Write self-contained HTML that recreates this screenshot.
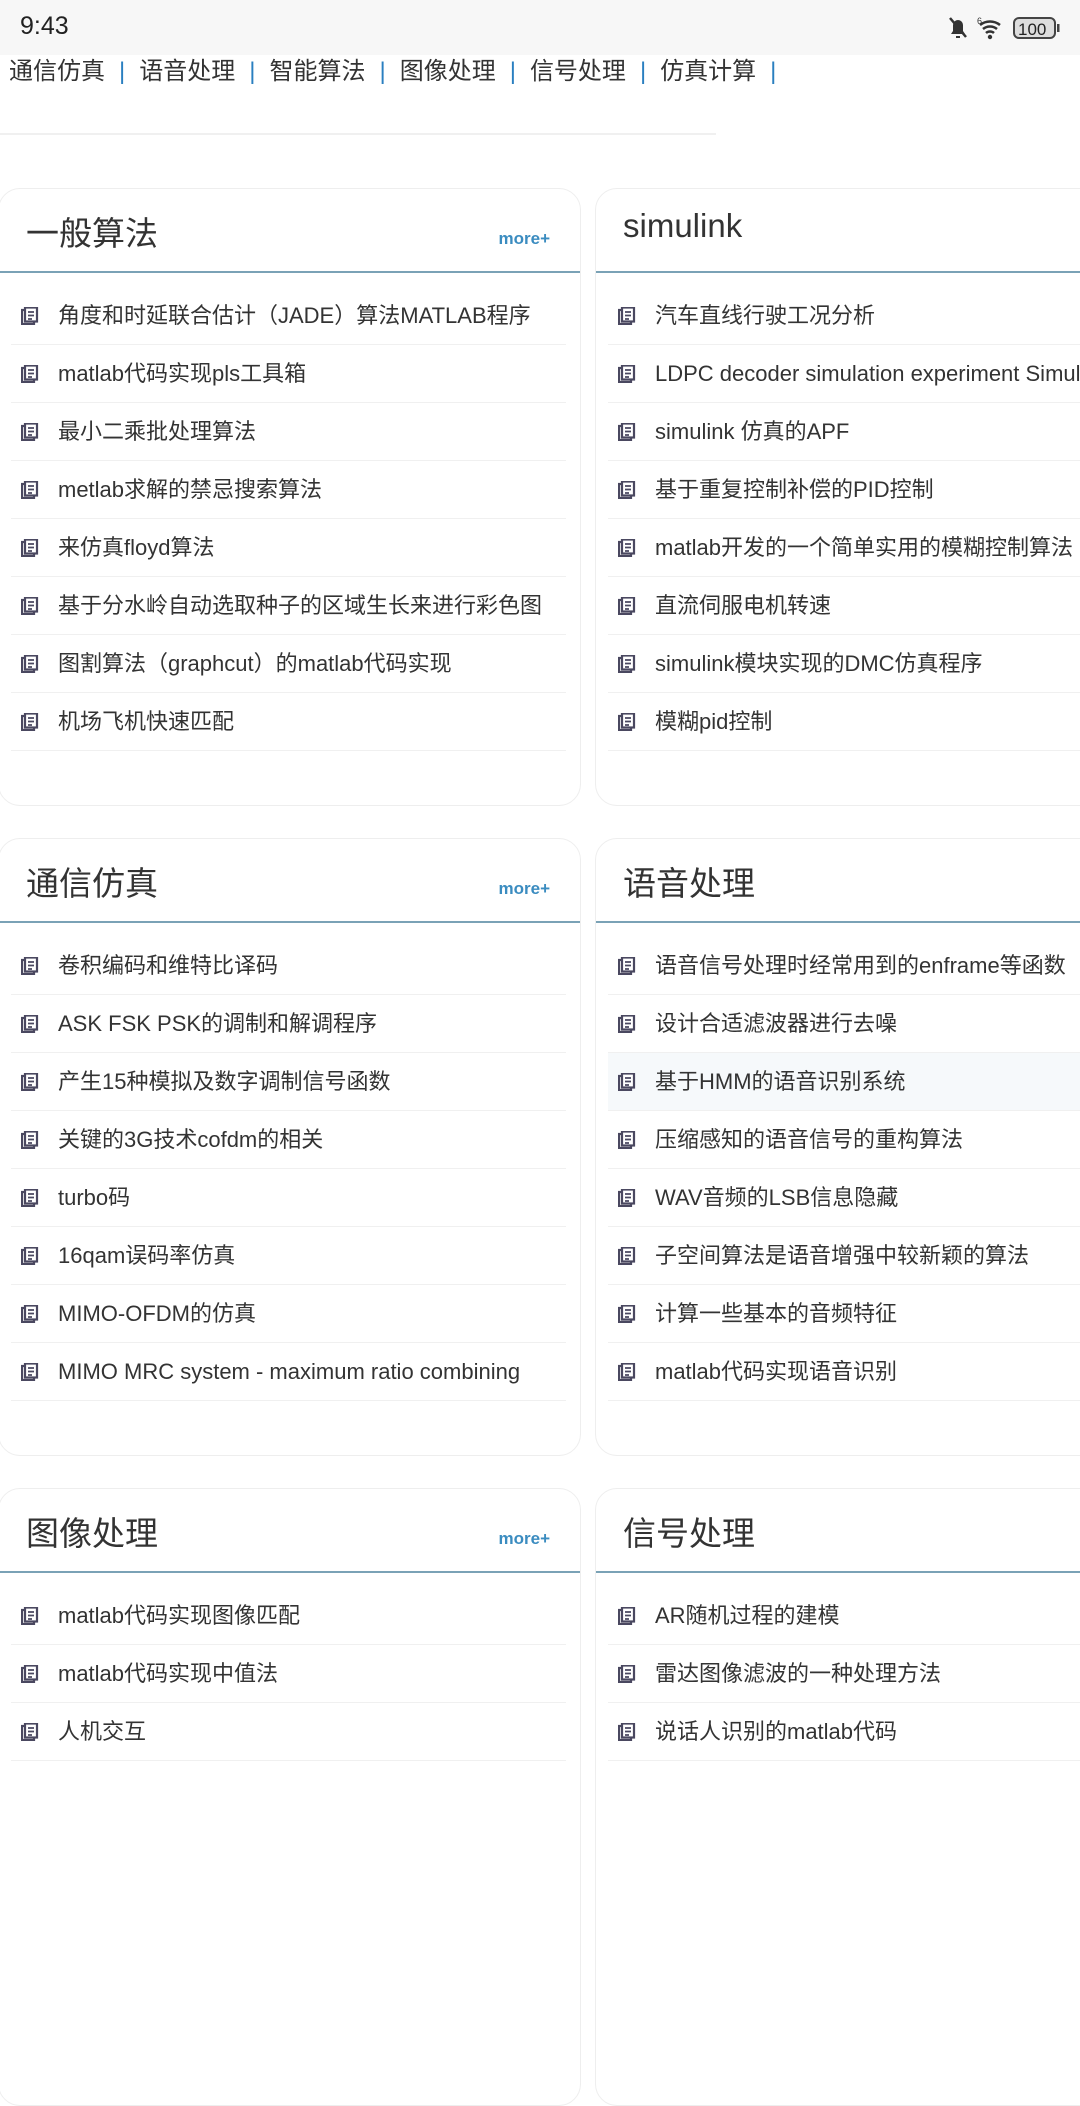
<!DOCTYPE html>
<html><head><meta charset="utf-8"><style>
*{margin:0;padding:0;box-sizing:border-box}
body{width:1080px;height:1728px;overflow:hidden;background:#fff;font-family:"Liberation Sans","Noto Sans CJK SC",sans-serif;color:#333;position:relative}
.sb{position:absolute;left:0;top:0;width:1080px;height:55px;background:#f7f7f7}
.time{position:absolute;left:20px;top:12px;font-size:25px;color:#222}
.nav{position:absolute;left:9px;top:56px;font-size:24px;color:#333;white-space:nowrap;line-height:32px}
.nav b{color:#2a7fc0;font-weight:normal;margin:0 14px}
.hr{position:absolute;left:0;top:133px;width:716px;height:2px;background:#f0f0f0}
.card{position:absolute;border:1.5px solid #eee;border-radius:22px;background:#fff;overflow:hidden}
.card h2{position:absolute;left:27px;top:18px;font-size:33px;font-weight:normal;color:#333}
.more{position:absolute;right:30px;top:40px;font-size:17px;font-weight:bold;color:#3b8cc0}
.hl{position:absolute;left:0;right:0;top:82px;height:2px;background:#7aa2b6}
.ul{position:absolute;left:12px;top:98px;right:14px;list-style:none}
.ul li{height:58px;border-bottom:1.5px solid #f0f0f0;font-size:22px;line-height:58px;white-space:nowrap;position:relative;padding-left:47px;color:#333}
.ul li.h{background:#f6f9fb}
.ul li svg{position:absolute;left:10px;top:20px}
</style></head><body>
<div class="sb"><div class="time">9:43</div>
<svg style="position:absolute;left:948px;top:15px" width="122" height="26" viewBox="0 0 122 26">
<path d="M3 19h14l-2-3V10a5 5 0 0 0-10 0v6z M8 21h4v2H8z" fill="#333"/><line x1="2" y1="3" x2="18" y2="22" stroke="#333" stroke-width="2.5"/>
<text x="29" y="9" font-size="9" fill="#333" font-family="Liberation Sans">6</text>
<path d="M32 10a16 16 0 0 1 20 0M35 14a11 11 0 0 1 14 0M38 18a6 6 0 0 1 8 0" stroke="#333" stroke-width="2.5" fill="none"/><circle cx="42" cy="22" r="2.2" fill="#333"/>
<rect x="66" y="3" width="41" height="20" rx="5" fill="#ddd" stroke="#444" stroke-width="2"/><rect x="109" y="9" width="2.5" height="8" fill="#444"/>
<text x="70" y="20" font-size="17" fill="#222" font-family="Liberation Sans">100</text></svg></div>
<div class="nav">通信仿真<b>|</b>语音处理<b>|</b>智能算法<b>|</b>图像处理<b>|</b>信号处理<b>|</b>仿真计算<b>|</b></div>
<div class="hr"></div>

<svg width="0" height="0" style="position:absolute"><defs><g id="ic"><rect x="1" y="3" width="12" height="14" fill="#fff" stroke="#4a4860" stroke-width="2.2"/><rect x="4" y="0.5" width="12" height="14" fill="#fff" stroke="#4a4860" stroke-width="2.2"/><path d="M7 5h6M7 8.5h6M7 12h4" stroke="#4a4860" stroke-width="1.8"/></g></defs></svg>

<div class="card" style="left:-2px;top:188px;width:583px;height:618px"><h2>一般算法</h2><span class="more">more+</span><div class="hl"></div>
<ul class="ul">
<li><svg width="18" height="18"><use href="#ic"/></svg>角度和时延联合估计（JADE）算法MATLAB程序</li>
<li><svg width="18" height="18"><use href="#ic"/></svg>matlab代码实现pls工具箱</li>
<li><svg width="18" height="18"><use href="#ic"/></svg>最小二乘批处理算法</li>
<li><svg width="18" height="18"><use href="#ic"/></svg>metlab求解的禁忌搜索算法</li>
<li><svg width="18" height="18"><use href="#ic"/></svg>来仿真floyd算法</li>
<li><svg width="18" height="18"><use href="#ic"/></svg>基于分水岭自动选取种子的区域生长来进行彩色图</li>
<li><svg width="18" height="18"><use href="#ic"/></svg>图割算法（graphcut）的matlab代码实现</li>
<li><svg width="18" height="18"><use href="#ic"/></svg>机场飞机快速匹配</li></ul></div>

<div class="card" style="left:595px;top:188px;width:520px;height:618px"><h2>simulink</h2><div class="hl"></div>
<ul class="ul" style="right:0">
<li><svg width="18" height="18"><use href="#ic"/></svg>汽车直线行驶工况分析</li>
<li><svg width="18" height="18"><use href="#ic"/></svg>LDPC decoder simulation experiment Simulink</li>
<li><svg width="18" height="18"><use href="#ic"/></svg>simulink 仿真的APF</li>
<li><svg width="18" height="18"><use href="#ic"/></svg>基于重复控制补偿的PID控制</li>
<li><svg width="18" height="18"><use href="#ic"/></svg>matlab开发的一个简单实用的模糊控制算法</li>
<li><svg width="18" height="18"><use href="#ic"/></svg>直流伺服电机转速</li>
<li><svg width="18" height="18"><use href="#ic"/></svg>simulink模块实现的DMC仿真程序</li>
<li><svg width="18" height="18"><use href="#ic"/></svg>模糊pid控制</li></ul></div>

<div class="card" style="left:-2px;top:838px;width:583px;height:618px"><h2>通信仿真</h2><span class="more">more+</span><div class="hl"></div>
<ul class="ul">
<li><svg width="18" height="18"><use href="#ic"/></svg>卷积编码和维特比译码</li>
<li><svg width="18" height="18"><use href="#ic"/></svg>ASK FSK PSK的调制和解调程序</li>
<li><svg width="18" height="18"><use href="#ic"/></svg>产生15种模拟及数字调制信号函数</li>
<li><svg width="18" height="18"><use href="#ic"/></svg>关键的3G技术cofdm的相关</li>
<li><svg width="18" height="18"><use href="#ic"/></svg>turbo码</li>
<li><svg width="18" height="18"><use href="#ic"/></svg>16qam误码率仿真</li>
<li><svg width="18" height="18"><use href="#ic"/></svg>MIMO-OFDM的仿真</li>
<li><svg width="18" height="18"><use href="#ic"/></svg>MIMO MRC system - maximum ratio combining</li></ul></div>

<div class="card" style="left:595px;top:838px;width:520px;height:618px"><h2>语音处理</h2><div class="hl"></div>
<ul class="ul" style="right:0">
<li><svg width="18" height="18"><use href="#ic"/></svg>语音信号处理时经常用到的enframe等函数</li>
<li><svg width="18" height="18"><use href="#ic"/></svg>设计合适滤波器进行去噪</li>
<li class="h"><svg width="18" height="18"><use href="#ic"/></svg>基于HMM的语音识别系统</li>
<li><svg width="18" height="18"><use href="#ic"/></svg>压缩感知的语音信号的重构算法</li>
<li><svg width="18" height="18"><use href="#ic"/></svg>WAV音频的LSB信息隐藏</li>
<li><svg width="18" height="18"><use href="#ic"/></svg>子空间算法是语音增强中较新颖的算法</li>
<li><svg width="18" height="18"><use href="#ic"/></svg>计算一些基本的音频特征</li>
<li><svg width="18" height="18"><use href="#ic"/></svg>matlab代码实现语音识别</li></ul></div>

<div class="card" style="left:-2px;top:1488px;width:583px;height:618px"><h2>图像处理</h2><span class="more">more+</span><div class="hl"></div>
<ul class="ul">
<li><svg width="18" height="18"><use href="#ic"/></svg>matlab代码实现图像匹配</li>
<li><svg width="18" height="18"><use href="#ic"/></svg>matlab代码实现中值法</li>
<li><svg width="18" height="18"><use href="#ic"/></svg>人机交互</li></ul></div>

<div class="card" style="left:595px;top:1488px;width:520px;height:618px"><h2>信号处理</h2><div class="hl"></div>
<ul class="ul" style="right:0">
<li><svg width="18" height="18"><use href="#ic"/></svg>AR随机过程的建模</li>
<li><svg width="18" height="18"><use href="#ic"/></svg>雷达图像滤波的一种处理方法</li>
<li><svg width="18" height="18"><use href="#ic"/></svg>说话人识别的matlab代码</li></ul></div>
</body></html>
